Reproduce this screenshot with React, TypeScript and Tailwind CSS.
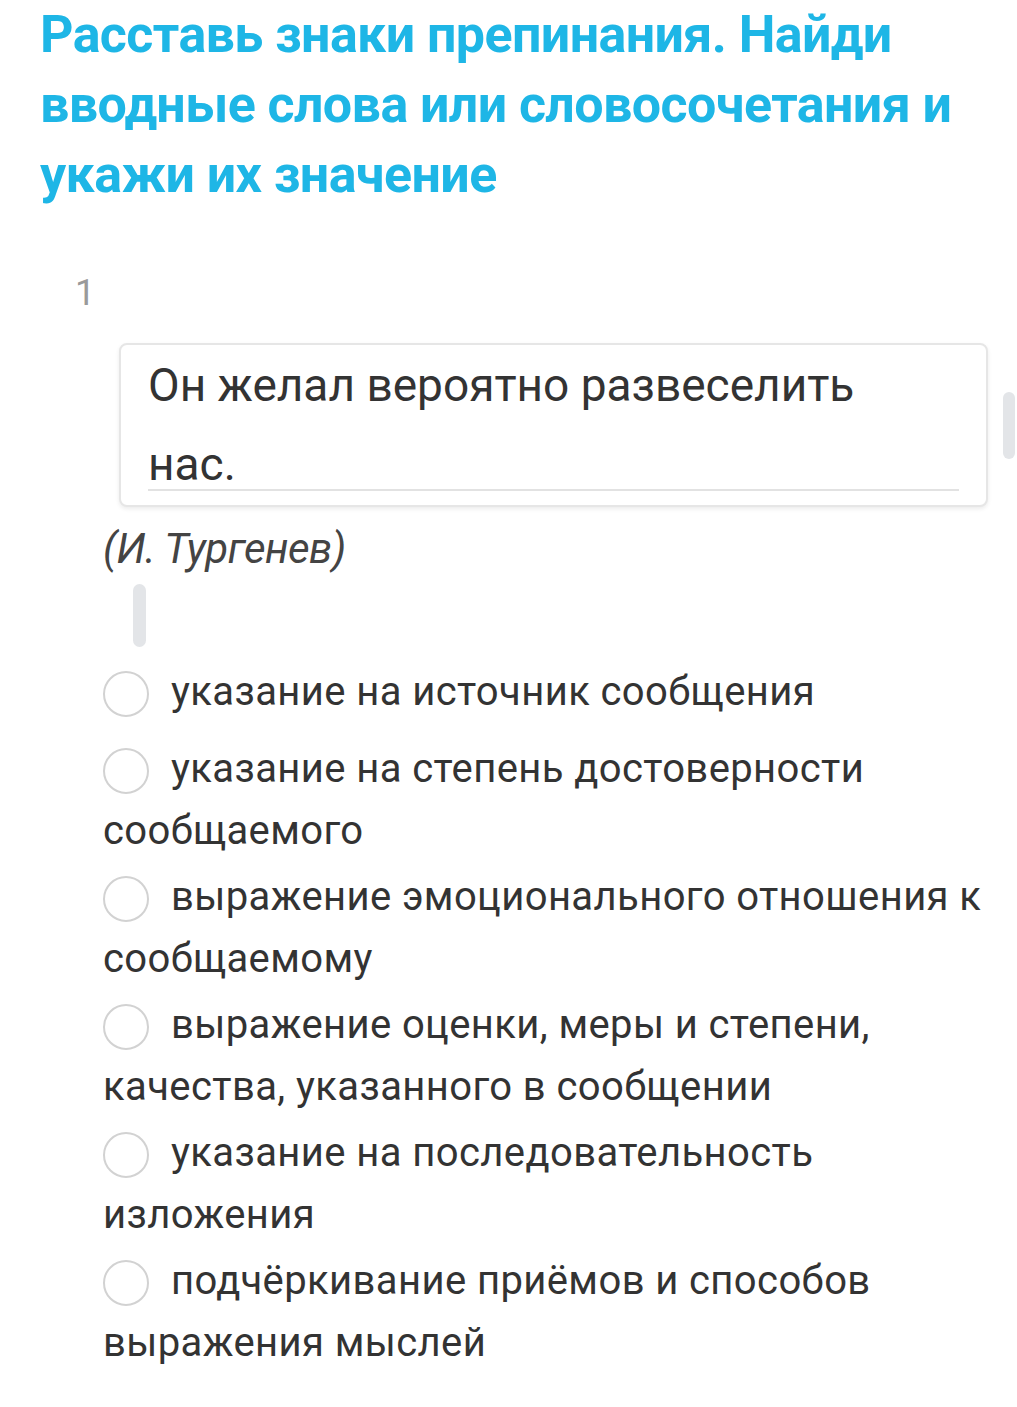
const options = [
  "указание на источник сообщения",
  "указание на степень достоверности сообщаемого",
  "выражение эмоционального отношения к сообщаемому",
  "выражение оценки, меры и степени, качества, указанного в сообщении",
  "указание на последовательность изложения",
  "подчёркивание приёмов и способов выражения мыслей",
];

export default function App() {
  return (
    <div
      className="relative min-h-[1407px] w-[1017px] overflow-hidden bg-white"
      style={{ fontFamily: "Roboto, 'Noto Sans', sans-serif" }}
    >
      <h1 className="pl-[40px] pr-[40px] pt-[0px] text-[52px] font-bold leading-[70px] tracking-[-0.6px] text-[#1eb6e6]">
        Расставь знаки препинания. Найди вводные слова или словосочетания и
        укажи их значение
      </h1>

      <div className="mt-[61px] pl-[75px] text-[36px] leading-[44px] text-[#9a9a9a]">
        1
      </div>

      <div className="relative ml-[119px] mr-[29px] mt-[28px]">
        <div className="rounded-[8px] border-2 border-[#e6e6e6] bg-white px-[27px] pb-[14px] pt-0 shadow-[0_2px_4px_rgba(0,0,0,0.08)]">
          <p className="text-[46px] leading-[80px] text-[#333]">
            Он желал вероятно развеселить
          </p>
          <p className="border-b-2 border-[#e2e2e2] pt-[14px] text-[46px] leading-[50px] text-[#333]">
            нас.
          </p>
        </div>
        <div className="absolute right-[-27px] top-[49px] h-[67px] w-[12px] rounded-full bg-[#e3e5e8]" />
      </div>

      <p className="mt-[18px] pl-[103px] text-[42px] italic leading-[48px] tracking-[-0.5px] text-[#444]">
        (И. Тургенев)
      </p>

      <div className="ml-[133px] mt-[11px] h-[63px] w-[13px] rounded-full bg-[#e3e5e8]" />

      <div className="mt-[14px] flex flex-col gap-[4px] pl-[103px] pr-[28px]">
        {options.map((o, i) => (
          <p
            key={o}
            className={`text-[40px] leading-[62px] tracking-[0.4px] text-[#333] ${i === 0 ? "mb-[11px]" : ""}`}
          >
            <span className="mr-[22px] inline-block h-[46px] w-[46px] rounded-full border-2 border-[#d2d2d2] align-middle" />
            {o}
          </p>
        ))}
      </div>
    </div>
  );
}
